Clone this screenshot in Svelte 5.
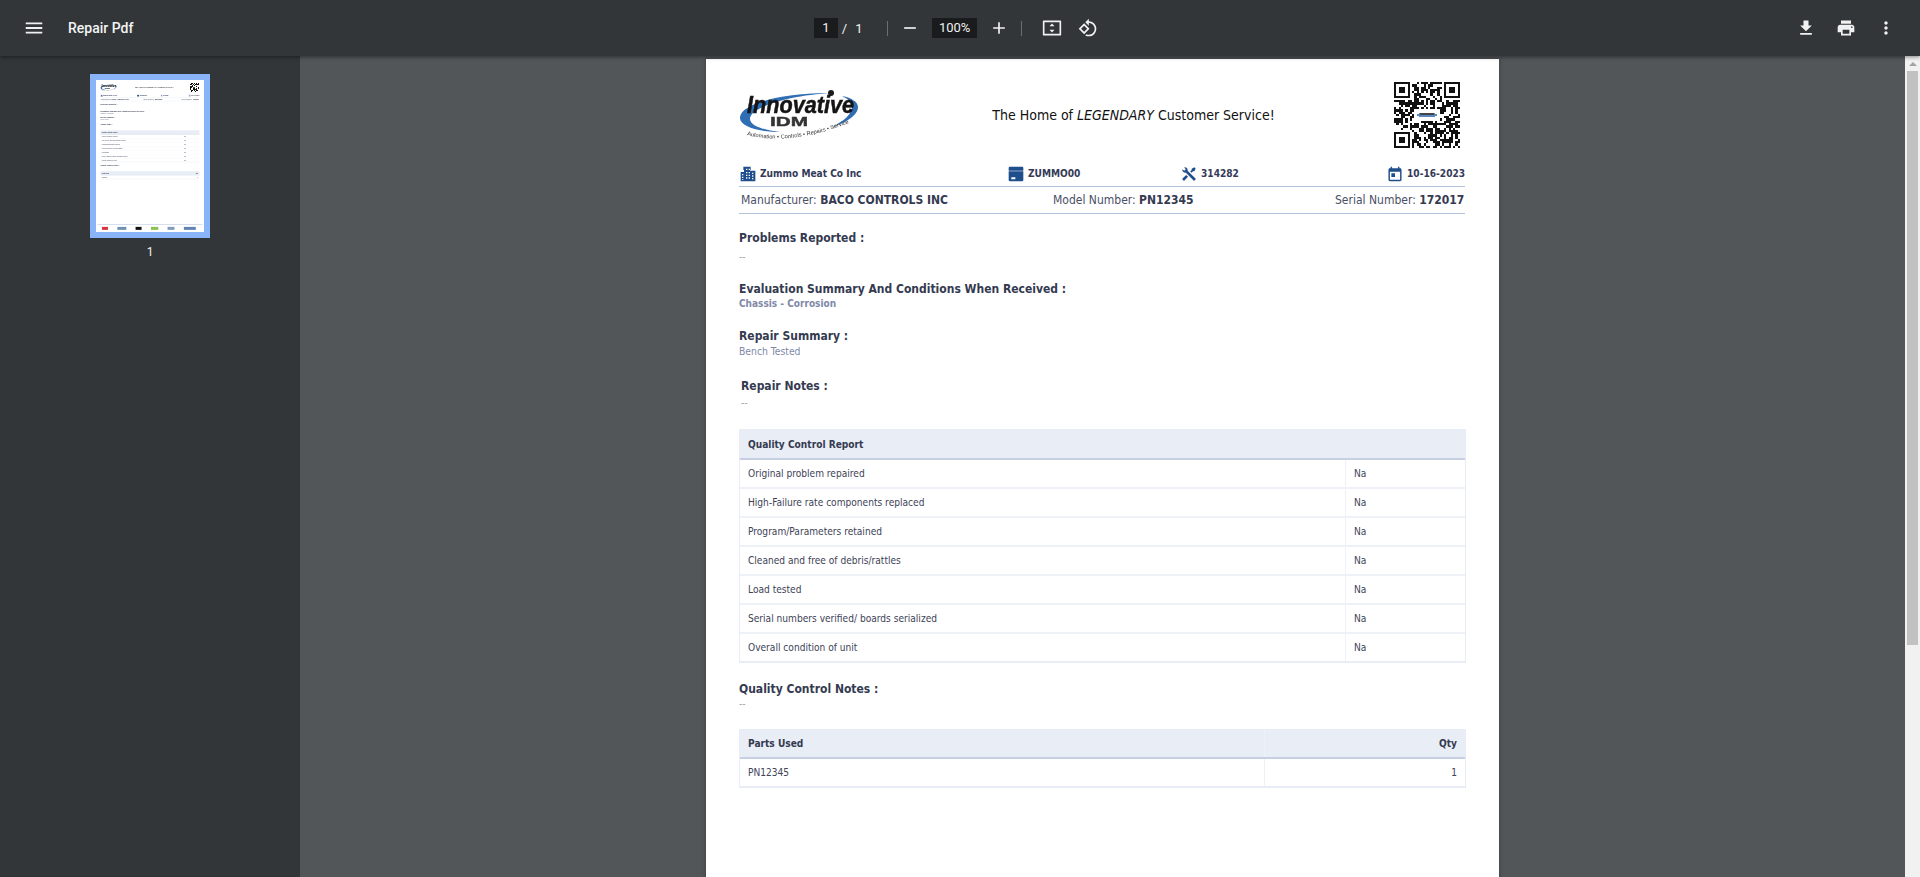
<script>
  const qcRows = [
    "Original problem repaired",
    "High-Failure rate components replaced",
    "Program/Parameters retained",
    "Cleaned and free of debris/rattles",
    "Load tested",
    "Serial numbers verified/ boards serialized",
    "Overall condition of unit"
  ];

  // QR modules: finder patterns plus pseudo random data, with a hole for the little logo
  const QR_SIZE = 29;
  const inFinder = (x, y) =>
    (x < 8 && y < 8) || (x >= QR_SIZE - 8 && y < 8) || (x < 8 && y >= QR_SIZE - 8);
  const finderOn = (x, y) => {
    const fx = x >= QR_SIZE - 8 ? x - (QR_SIZE - 7) : x;
    const fy = y >= QR_SIZE - 8 ? y - (QR_SIZE - 7) : y;
    if (fx < 0 || fy < 0 || fx > 6 || fy > 6) return false;
    if (fx === 0 || fx === 6 || fy === 0 || fy === 6) return true;
    return fx >= 2 && fx <= 4 && fy >= 2 && fy <= 4;
  };
  const qrCells = [];
  let seed = 20231016;
  for (let y = 0; y < QR_SIZE; y++) {
    for (let x = 0; x < QR_SIZE; x++) {
      seed = (seed * 1103515245 + 12345) & 0x7fffffff;
      const hole = x >= 9 && x <= 19 && y >= 12 && y <= 16;
      const on = inFinder(x, y) ? finderOn(x, y) : !hole && (seed >> 16) % 100 < 55;
      if (on) qrCells.push({ x, y });
    }
  }

  // only visible in the thumbnail, the page itself is cut off above them
  const footerLogos = [
    { c: "#d9333f", w: 44 },
    { c: "#6f93b5", w: 66 },
    { c: "#111111", w: 44 },
    { c: "#8cc152", w: 54 },
    { c: "#7f9cbc", w: 51 },
    { c: "#5f83b3", w: 88 }
  ];
</script>

{#snippet logo(id)}
  <svg class="logo" viewBox="0 0 120 56" width="120" height="56">
    <g transform="translate(0 -1)" fill="#2f6db5">
      <path d="M92 7C50 6 2 16 0 31-1 40 18 46 40 46 24 44 9 40 10 32 12 20 52 9 92 7Z"/>
      <path d="M102 10C112 12 118 16 118 21 118 29 106 37 92 41 104 35 112 28 112 21 112 16 108 13 102 10Z"/>
    </g>
    <circle cx="91" cy="6" r="3" fill="#1a1a1a"/>
    <text x="7" y="26" class="logo-name" textLength="107" lengthAdjust="spacingAndGlyphs">Innovative</text>
    <text x="30" y="39" class="logo-idm" textLength="38" lengthAdjust="spacingAndGlyphs">IDM</text>
    <path id={id} d="M7 48Q53 60 119 32" fill="none"/>
    <text class="logo-tag"><textPath href="#{id}">Automation • Controls • Repairs • Service</textPath></text>
  </svg>
{/snippet}

{#snippet qr()}
  <svg class="qr" viewBox="0 0 29 29" width="66" height="66" shape-rendering="crispEdges">
    {#each qrCells as cell}
      <rect x={cell.x} y={cell.y} width="1" height="1" fill="#111"/>
    {/each}
    <ellipse cx="14.5" cy="14.500" rx="4.500" ry="1" fill="#5a86bb"/>
    <rect x="11.500" y="13.800" width="6" height="0.8" fill="#444"/>
  </svg>
{/snippet}

{#snippet doc(id)}
  <header class="brand">
    {@render logo(id)}
    <div class="tagline">The Home of <i>LEGENDARY</i> Customer Service!</div>
    {@render qr()}
  </header>

  <div class="info">
    <span class="info-item">
      <svg viewBox="0 0 24 24" width="16" height="16"><path fill="#1f4e8c" fill-rule="evenodd" d="M8 1h8v5h-1v1h8v16H1V9h5V6H5V1zm1 3v2h2V4zm4 0v2h2V4zM9 9v2h2V9zm4 0v2h2V9zm5 1v2h2v-2zM3 12v2h2v-2zm6 1v2h2v-2zm4 0v2h2v-2zm5 1v2h2v-2zM3 16v2h2v-2zm6 1v2h2v-2zm4 0v2h2v-2zm5 1v2h2v-2zM3 20v1h2v-1z"/></svg>
      Zummo Meat Co Inc
    </span>
    <span class="info-item">
      <svg viewBox="0 0 24 24" width="16" height="16"><path fill="#1f4e8c" fill-rule="evenodd" d="M3 1h18a2 2 0 0 1 2 2v18a2 2 0 0 1-2 2H3a2 2 0 0 1-2-2V3a2 2 0 0 1 2-2zM1 7v1h22V7zm4 10v3h6v-3z"/></svg>
      ZUMMO00
    </span>
    <span class="info-item">
      <svg viewBox="0 0 24 24" width="16" height="16"><path fill="#1f4e8c" d="M21.710 20.290L20.290 21.710A1 1 0 0 1 18.880 21.710L7 9.850A3.810 3.810 0 0 1 6 10A4 4 0 0 1 2.220 4.700L4.760 7.240L5.290 6.710L6.710 5.290L7.240 4.760L4.700 2.220A4 4 0 0 1 10 6A3.810 3.810 0 0 1 9.850 7L21.710 18.880A1 1 0 0 1 21.710 20.290M2.290 18.880A1 1 0 0 0 2.290 20.290L3.710 21.710A1 1 0 0 0 5.120 21.710L10.590 16.250L7.760 13.420M20 2L16 4V6L13.830 8.170L15.830 10.170L18 8H20L22 4Z"/></svg>
      314282
    </span>
    <span class="info-item">
      <svg viewBox="2 0 20 22" width="16" height="16"><path fill="#1f4e8c" d="M19 3h-1V1h-2v2H8V1H6v2H5c-1.110 0-1.990.9-1.990 2L3 19c0 1.100.89 2 2 2h14c1.100 0 2-.9 2-2V5c0-1.100-.9-2-2-2zm0 16H5V8h14v11zM7 10h5v5H7z"/></svg>
      10-16-2023
    </span>
  </div>

  <div class="unit">
    <span>Manufacturer: <b>BACO CONTROLS INC</b></span>
    <span>Model Number: <b>PN12345</b></span>
    <span>Serial Number: <b>172017</b></span>
  </div>

  <section class="block problems">
    <h3>Problems Reported :</h3>
    <p class="empty">--</p>
  </section>
  <section class="block evaluation">
    <h3>Evaluation Summary And Conditions When Received :</h3>
    <p class="strong">Chassis - Corrosion</p>
  </section>
  <section class="block summary">
    <h3>Repair Summary :</h3>
    <p>Bench Tested</p>
  </section>
  <section class="block notes">
    <h3>Repair Notes :</h3>
    <p class="empty">--</p>
  </section>

  <div class="table qc">
    <div class="row head"><div class="cell span">Quality Control Report</div></div>
    {#each qcRows as label}
      <div class="row">
        <div class="cell main">{label}</div>
        <div class="cell side">Na</div>
      </div>
    {/each}
  </div>

  <section class="block qc-notes">
    <h3>Quality Control Notes :</h3>
    <p class="empty">--</p>
  </section>

  <div class="table parts">
    <div class="row head">
      <div class="cell main">Parts Used</div>
      <div class="cell side">Qty</div>
    </div>
    <div class="row">
      <div class="cell main">PN12345</div>
      <div class="cell side">1</div>
    </div>
  </div>

  <footer class="doc-footer">
    {#each footerLogos as f}
      <span class="foot-logo" style="background:{f.c};width:{f.w}px"></span>
    {/each}
  </footer>
{/snippet}

<div class="app">
  <div class="toolbar">
    <div class="tb-left">
      <svg class="ic" viewBox="0 0 24 24" width="22" height="22"><path fill="#f1f1f1" d="M3 18h18v-2H3v2zm0-5h18v-2H3v2zm0-7v2h18V6H3z"/></svg>
      <span class="title">Repair Pdf</span>
    </div>
    <div class="tb-center">
      <span class="num-box">1</span>
      <span class="slash">/</span>
      <span class="total">1</span>
      <span class="sep"></span>
      <svg class="ic" viewBox="0 0 24 24" width="20" height="20"><path fill="#f1f1f1" d="M19 13H5v-2h14v2z"/></svg>
      <span class="zoom-box">100%</span>
      <svg class="ic" viewBox="0 0 24 24" width="20" height="20"><path fill="#f1f1f1" d="M19 13h-6v6h-2v-6H5v-2h6V5h2v6h6v2z"/></svg>
      <span class="sep second"></span>
      <svg class="ic fit" viewBox="0 0 24 24" width="20" height="20"><path fill="#f1f1f1" fill-rule="evenodd" d="M2 3h20a1 1 0 0 1 1 1v16a1 1 0 0 1-1 1H2a1 1 0 0 1-1-1V4a1 1 0 0 1 1-1zm1 2v14h18V5zm9 1.500 3 3.500H9zm0 11-3-3.500h6z"/></svg>
      <svg class="ic" viewBox="0 0 24 24" width="20" height="20"><path fill="#f1f1f1" d="M7.340 6.410.86 12.900l6.490 6.480 6.490-6.480-6.500-6.490zM3.690 12.900l3.660-3.660L11 12.900l-3.660 3.660-3.650-3.660zm15.670-6.260C17.610 4.880 15.300 4 13 4V.76L8.760 5 13 9.240V6c1.790 0 3.580.68 4.950 2.050 2.730 2.730 2.730 7.170 0 9.900C16.580 19.320 14.790 20 13 20c-.97 0-1.940-.21-2.840-.61l-1.490 1.490C10.020 21.620 11.510 22 13 22c2.300 0 4.610-.88 6.360-2.640 3.520-3.510 3.520-9.210 0-12.720z"/></svg>
    </div>
    <div class="tb-right">
      <svg class="ic" viewBox="0 0 24 24" width="20" height="20"><path fill="#f1f1f1" d="M19 9h-4V3H9v6H5l7 7 7-7zM5 18v2h14v-2H5z"/></svg>
      <svg class="ic" viewBox="0 0 24 24" width="20" height="20"><path fill="#f1f1f1" d="M19 8H5c-1.660 0-3 1.340-3 3v6h4v4h12v-4h4v-6c0-1.660-1.340-3-3-3zm-3 11H8v-5h8v5zm3-7c-.55 0-1-.45-1-1s.45-1 1-1 1 .45 1 1-.45 1-1 1zm-1-9H6v4h12V3z"/></svg>
      <svg class="ic" viewBox="0 0 24 24" width="20" height="20"><path fill="#f1f1f1" d="M12 8c1.100 0 2-.9 2-2s-.9-2-2-2-2 .9-2 2 .9 2 2 2zm0 2c-1.100 0-2 .9-2 2s.9 2 2 2 2-.9 2-2-.9-2-2-2zm0 6c-1.100 0-2 .9-2 2s.9 2 2 2 2-.9 2-2-.9-2-2-2z"/></svg>
    </div>
  </div>

  <div class="body">
    <aside class="sidebar">
      <div class="thumb-frame">
        <div class="thumb-scale">
          <div class="sheet">{@render doc("tag-thumb")}</div>
        </div>
      </div>
      <div class="thumb-num">1</div>
    </aside>

    <main class="viewer">
      <div class="sheet page">{@render doc("tag-page")}</div>
    </main>

    <div class="scrollbar">
      <span class="arrow"></span>
      <span class="handle"></span>
    </div>
  </div>
</div>

<style>
  :global(body) {
    margin: 0;
    overflow: hidden;
  }

  .app {
    width: 1920px;
    height: 877px;
    display: flex;
    flex-direction: column;
    overflow: hidden;
    font-family: Roboto, "Liberation Sans", sans-serif;
    background: #525659;
  }

  /* toolbar */
  .toolbar {
    height: 56px;
    flex: none;
    background: #323639;
    color: #f1f1f1;
    display: grid;
    grid-template-columns: 1fr auto 1fr;
    align-items: center;
    box-shadow: 0 1px 4px rgba(0, 0, 0, 0.45);
    position: relative;
    z-index: 2;
  }

  .ic {
    display: block;
    flex: none;
  }

  .tb-left {
    display: flex;
    align-items: center;
    padding-left: 23px;
  }

  .title {
    margin-left: 23px;
    font-size: 14px;
    font-weight: 500;
    color: #f4f4f4;
  }

  .tb-center {
    display: flex;
    align-items: center;
    font-size: 13px;
    margin-right: 8px;
  }

  .num-box,
  .zoom-box {
    height: 20px;
    line-height: 20px;
    background: #191b1c;
    text-align: center;
    color: #f1f1f1;
  }

  .num-box {
    width: 24px;
  }

  .zoom-box {
    width: 45px;
    margin: 0 12px;
  }

  .slash {
    margin-left: 4px;
  }

  .total {
    margin-left: 8px;
    width: 9px;
  }

  .sep {
    width: 1px;
    height: 15px;
    background: #6b6f72;
    margin: 0 12px 0 23px;
  }

  .sep.second {
    margin: 0 20px 0 12px;
  }

  .fit {
    margin-right: 16px;
  }

  .tb-right {
    display: flex;
    justify-content: flex-end;
    align-items: center;
    gap: 20px;
    padding-right: 24px;
  }

  /* layout under the toolbar */
  .body {
    flex: 1;
    min-height: 0;
    display: flex;
  }

  .sidebar {
    width: 300px;
    flex: none;
    background: #323639;
    box-sizing: border-box;
    padding-top: 18px;
    display: flex;
    flex-direction: column;
    align-items: center;
  }

  .thumb-frame {
    width: 108px;
    height: 152px;
    border: 6px solid #8ab4f8;
    background: #fff;
    overflow: hidden;
  }

  .thumb-scale {
    transform: scale(0.136);
    transform-origin: 0 0;
    width: 793px;
    filter: blur(1.5px);
  }

  .thumb-num {
    margin-top: 7px;
    font-size: 12px;
    color: #f1f1f1;
    line-height: 14px;
  }

  .viewer {
    flex: 1;
    min-width: 0;
    overflow: hidden;
    display: flex;
    justify-content: center;
    padding-top: 3px;
    box-sizing: border-box;
  }

  .page {
    flex: none;
    box-shadow: 0 0 4px rgba(0, 0, 0, 0.3);
  }

  .scrollbar {
    width: 15px;
    flex: none;
    background: #f1f1f1;
    display: flex;
    flex-direction: column;
    align-items: center;
  }

  .arrow {
    margin-top: 6px;
    width: 0;
    height: 0;
    border-left: 4px solid transparent;
    border-right: 4px solid transparent;
    border-bottom: 4px solid #a3a3a3;
  }

  .handle {
    margin-top: 5px;
    width: 11px;
    height: 574px;
    background: #c1c1c1;
  }

  /* pdf sheet */
  .sheet {
    width: 793px;
    height: 1117px;
    box-sizing: border-box;
    background: #fff;
    padding: 18px 34px 0 33px;
    font-family: "DejaVu Sans Condensed", "DejaVu Sans", sans-serif;
    font-stretch: condensed;
    color: #2b3044;
    position: relative;
  }

  .brand {
    display: flex;
    align-items: center;
    justify-content: space-between;
    height: 76px;
    padding: 0 5px 0 1px;
  }

  .logo,
  .qr {
    display: block;
    overflow: visible;
    filter: blur(0.35px);
  }

  .logo-name {
    font: italic 700 24px "Liberation Sans", sans-serif;
    fill: #141414;
    stroke: #141414;
    stroke-width: 0.5px;
  }

  .logo-idm {
    font: 700 12.500px "Liberation Sans", sans-serif;
    fill: #333;
    stroke: #333;
    stroke-width: 0.4px;
  }

  .logo-tag {
    font: 5.700px "Liberation Sans", sans-serif;
    fill: #333;
  }

  .tagline {
    font-size: 14px;
    color: #111;
    margin-left: 13px;
  }

  .info {
    display: grid;
    grid-template-columns: 268px 173px 206px 1fr;
    align-items: center;
    height: 25px;
    margin-top: 8px;
    padding-left: 1px;
    font-size: 10.100px;
    font-weight: 700;
    color: #343a58;
    border-bottom: 1px solid #b4c4dc;
  }

  .info-item {
    display: inline-flex;
    align-items: center;
    gap: 4px;
    white-space: nowrap;
  }

  .unit {
    display: grid;
    grid-template-columns: 312px 282px 1fr;
    align-items: center;
    height: 26px;
    padding-left: 2px;
    font-size: 12px;
    color: #4a4f66;
    border-bottom: 1px solid #b4c4dc;
  }

  .unit b {
    color: #343a50;
  }

  .block h3 {
    margin: 0;
    font-size: 12px;
    line-height: 16px;
    color: #343a50;
  }

  .block p {
    margin: 0;
    font-size: 10.300px;
    line-height: 14px;
    color: #8089a8;
  }

  .block p.strong {
    font-weight: 700;
    font-size: 10px;
  }

  .block p.empty {
    color: #a0a4b0;
  }

  .problems {
    margin-top: 16px;
  }

  .problems p.empty {
    margin-top: 3px;
  }

  .evaluation {
    margin-top: 18px;
  }

  .summary {
    margin-top: 17px;
  }

  .notes {
    margin-top: 20px;
    padding-left: 2px;
  }

  .notes p.empty {
    margin-top: 1px;
  }

  .table {
    border: 1px solid #e8edf5;
    border-bottom-width: 2px;
    width: 727px;
    box-sizing: border-box;
    font-size: 10.100px;
    color: #3e4358;
  }

  .qc {
    margin-top: 20px;
  }

  .parts {
    margin-top: 19px;
  }

  .row {
    display: flex;
    height: 29px;
    box-sizing: border-box;
    border-bottom: 2px solid #eef1f8;
    align-items: stretch;
  }

  .row:last-child {
    height: 27px;
    border-bottom: 0;
  }

  .row.head {
    height: 30px;
    background: #e9eef6;
    border-bottom: 2px solid #c6d0e2;
    font-weight: 700;
    color: #343a50;
  }

  .parts .row.head {
    height: 29px;
  }

  .cell {
    display: flex;
    align-items: center;
    padding: 0 8px;
  }

  .span {
    flex: 1;
  }

  .main {
    flex: 1;
    min-width: 0;
  }

  .side {
    width: 120px;
    box-sizing: border-box;
    border-left: 1.500px solid #eef1f8;
  }

  .parts .side {
    width: 201px;
    justify-content: flex-end;
  }

  .qc-notes {
    margin-top: 18px;
  }

  .block.qc-notes p.empty {
    margin-top: -1px;
  }

  .doc-footer {
    position: absolute;
    left: 10px;
    right: 10px;
    top: 1059px;
    border-top: 6px solid #cfd8e8;
    padding: 15px 49px 0 34px;
    display: flex;
    justify-content: space-between;
    align-items: center;
  }

  .foot-logo {
    display: block;
    height: 22px;
  }
</style>
